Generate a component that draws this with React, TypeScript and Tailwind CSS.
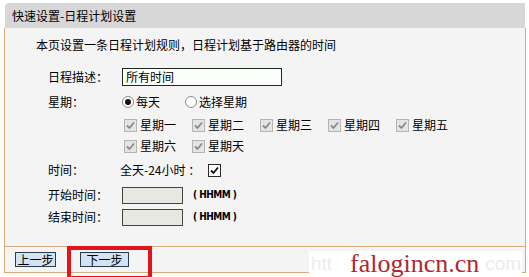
const days1 = ["星期一", "星期二", "星期三", "星期四", "星期五"];
const days2 = ["星期六", "星期天"];

function GrayCheck() {
  return (
    <span className="w-[13px] h-[13px] bg-[#e4e4e4] border border-[#b4b4b4] flex items-center justify-center shrink-0">
      <svg width="9" height="9" viewBox="0 0 9 9">
        <path d="M1 4.5 L3.5 7 L8 1.5" stroke="#8a8a8a" strokeWidth="1.8" fill="none" />
      </svg>
    </span>
  );
}

function Radio({ on }: { on?: boolean }) {
  return (
    <span className="w-[12px] h-[12px] rounded-full bg-white border border-[#8c8c8c] flex items-center justify-center shrink-0">
      {on && <span className="w-[6px] h-[6px] rounded-full bg-[#111]" />}
    </span>
  );
}

function Row({ label, children, className }: { label: string; children?: React.ReactNode; className?: string }) {
  return (
    <div className={"flex items-center h-[20px] " + (className ?? "")}>
      <div className="w-[72px] shrink-0">{label}</div>
      {children}
    </div>
  );
}

export default function App() {
  return (
    <div className="w-[529px] h-[277px] bg-white relative overflow-hidden text-[12px] leading-none text-black font-['Noto_Sans_CJK_SC',sans-serif]">
      <div className="pt-[3px] pl-[4px] w-[526px]">
        <div className="ml-[1px] w-[520px] h-[25px] bg-[#d7d7d7] rounded-tl-[4px] pl-[7px] flex items-center">
          快速设置-日程计划设置
        </div>
        <div className="h-[219px] bg-[#f4f4f4] border-x border-b border-[#d9ab78] pl-[43px] pt-[7px]">
          <div className="h-[20px] flex items-center -ml-[12px]">本页设置一条日程计划规则，日程计划基于路由器的时间</div>
          <Row label="日程描述：" className="mt-[12px]">
            <div className="ml-[2px] w-[160px] h-[18px] border border-[#1e2a1e] bg-[#fbfffb] pl-[3px] flex items-center">所有时间</div>
          </Row>
          <Row label="星期：" className="mt-[5px]">
            <div className="ml-[2px] flex items-center">
              <Radio on />
              <span className="ml-[2px]">每天</span>
              <span className="ml-[25px]"><Radio /></span>
              <span className="ml-[2px]">选择星期</span>
            </div>
          </Row>
          <div className="flex h-[20px] items-center mt-[3px] ml-[76px]">
            {days1.map((d) => (
              <div key={d} className="w-[68px] flex items-center gap-[3px]">
                <GrayCheck />
                <span>{d}</span>
              </div>
            ))}
          </div>
          <div className="flex h-[20px] items-center mt-[1px] ml-[76px]">
            {days2.map((d) => (
              <div key={d} className="w-[68px] flex items-center gap-[3px]">
                <GrayCheck />
                <span>{d}</span>
              </div>
            ))}
          </div>
          <Row label="时间：" className="mt-[4px]">
            <span>全天-24小时 ：</span>
            <span className="ml-[8px] w-[13px] h-[13px] bg-white border border-[#2a2a2a] flex items-center justify-center">
              <svg width="9" height="9" viewBox="0 0 9 9">
                <path d="M1 4.5 L3.5 7 L8 1.5" stroke="#111" strokeWidth="1.8" fill="none" />
              </svg>
            </span>
          </Row>
          <Row label="开始时间：" className="mt-[5px]">
            <div className="ml-[2px] w-[61px] h-[17px] border border-[#3a4a3a] bg-[#e8e8e2]" />
            <span className="ml-[10px] text-[10px] font-bold tracking-[-0.5px] font-['DejaVu_Sans_Condensed',sans-serif]">( HHMM )</span>
          </Row>
          <Row label="结束时间：" className="mt-[2px]">
            <div className="ml-[2px] w-[61px] h-[17px] border border-[#3a4a3a] bg-[#e8e8e2]" />
            <span className="ml-[10px] text-[10px] font-bold tracking-[-0.5px] font-['DejaVu_Sans_Condensed',sans-serif]">( HHMM )</span>
          </Row>
        </div>
        <div className="h-[26px] bg-[#f4f4f4] border-x border-b border-[#d9ab78] flex items-center pl-[10px]">
          <button className="w-[41px] h-[15px] bg-[#d3e3f3] border border-[#2c3b4c] flex items-center justify-center text-[12px] leading-none">上一步</button>
          <button className="ml-[24px] w-[49px] h-[15px] bg-[#d3e3f3] border border-[#2c3b4c] flex items-center justify-center text-[12px] leading-none">下一步</button>
        </div>
      </div>

      <div className="absolute left-[67px] top-[246px] w-[85px] h-[34px] border-4 border-[#e0141c]" />

      <div className="absolute left-[309px] top-[251px] w-[213px] h-[26px] bg-white flex items-center">
        <span className="w-[41px] pl-[2px] text-[19px] leading-[22px] text-[#ececec] font-['Liberation_Sans',sans-serif]">htt</span>
        <span className="text-[26px] leading-[26px] text-[#b3262d] font-['Liberation_Serif',serif]">falogincn.cn</span>
        <span className="ml-[6px] text-[19px] leading-[22px] text-[#ececec] font-['Liberation_Sans',sans-serif]">com</span>
      </div>
    </div>
  );
}
